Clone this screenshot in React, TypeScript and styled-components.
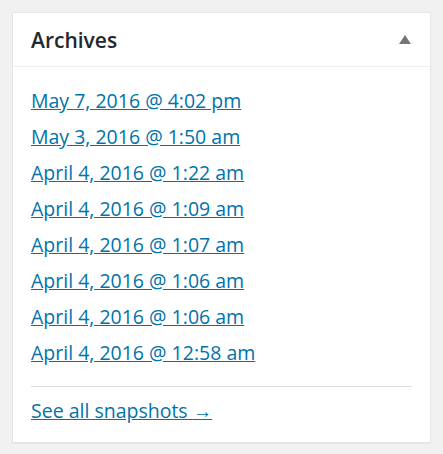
import React from 'react'
import styled, { createGlobalStyle } from 'styled-components'

const Global = createGlobalStyle`
  body {
    margin: 0;
    background: #f1f1f1;
    font-family: 'Open Sans', 'Liberation Sans', sans-serif;
  }
`

const Page = styled.div`
  padding: 12px;
`

const Panel = styled.div`
  background: #fff;
  border: 1px solid #e5e5e5;
  box-shadow: 0 1px 1px rgba(0, 0, 0, 0.04);
`

const Header = styled.div`
  display: flex;
  align-items: center;
  justify-content: space-between;
  height: 53px;
  padding: 0 19px 0 18px;
  border-bottom: 1px solid #eee;
`

const Title = styled.h2`
  margin: 0;
  font-size: 21px;
  font-weight: 600;
  color: #23282d;
`

const Toggle = styled.span`
  width: 0;
  height: 0;
  border-left: 6px solid transparent;
  border-right: 6px solid transparent;
  border-bottom: 9px solid #72777c;
`

const Body = styled.div`
  padding: 15px 18px 18px;
`

const List = styled.ul`
  list-style: none;
  margin: 0;
  padding: 0 0 16px;
  border-bottom: 1px solid #ddd;
`

const Item = styled.li`
  height: 36px;
  display: flex;
  align-items: center;
`

const Link = styled.a`
  font-size: 19.5px;
  color: #0073aa;
  text-decoration: underline;
`

const Arrow = styled.span`
  font-weight: 600;
`

const Footer = styled.div`
  padding-top: 10px;
`

const snapshots = [
  'May 7, 2016 @ 4:02 pm',
  'May 3, 2016 @ 1:50 am',
  'April 4, 2016 @ 1:22 am',
  'April 4, 2016 @ 1:09 am',
  'April 4, 2016 @ 1:07 am',
  'April 4, 2016 @ 1:06 am',
  'April 4, 2016 @ 1:06 am',
  'April 4, 2016 @ 12:58 am',
]

export default function App() {
  return (
    <Page>
      <Global />
      <Panel>
        <Header>
          <Title>Archives</Title>
          <Toggle />
        </Header>
        <Body>
          <List>
            {snapshots.map((s, i) => (
              <Item key={i}>
                <Link href="#">{s}</Link>
              </Item>
            ))}
          </List>
          <Footer>
            <Link href="#">
              See all snapshots <Arrow>→</Arrow>
            </Link>
          </Footer>
        </Body>
      </Panel>
    </Page>
  )
}
